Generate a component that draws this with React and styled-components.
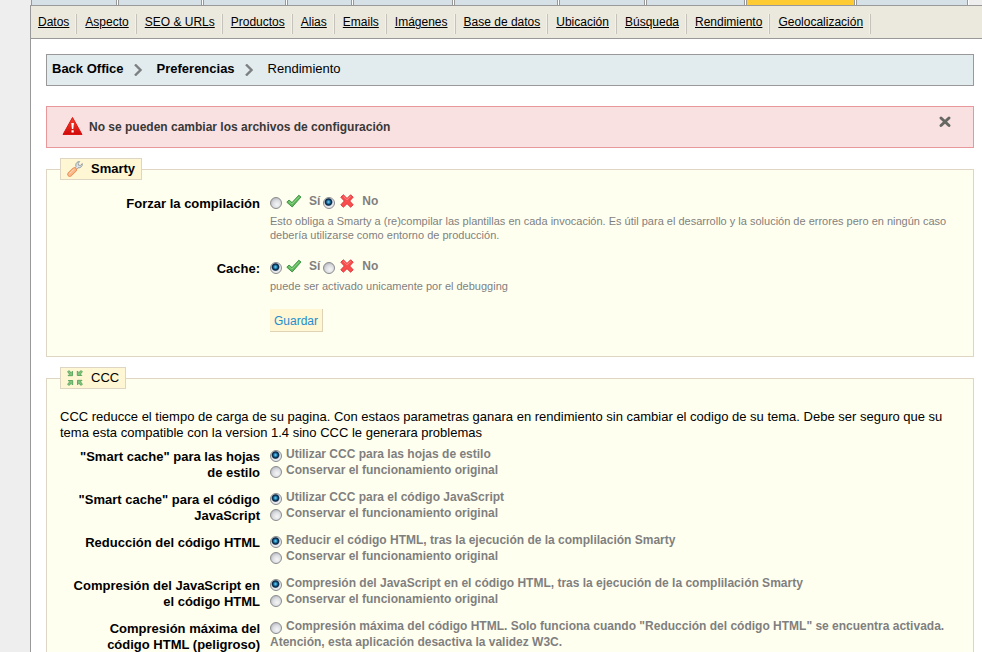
import React from "react";
import styled, { createGlobalStyle } from "styled-components";

const clr = {
   line: "#999999",
   cream: "#ebe9de",
   ice: "#e2ebee",
   tab: "#d5e1e7",
   active: "#ffcb33",
   field: "#fffff0",
   legend: "#fff6d3",
   fieldLine: "#dfd5c3",
   gray: "#7f7f7f",
};

const GlobalStyle = createGlobalStyle`
   * {
      box-sizing:border-box;
   }
   html {
      scrollbar-width:none;
   }
   body {
      margin:0;
      background:#eeeeee;
      color:#000000;
      font-family:"Liberation Sans", Arial, sans-serif;
      font-size:13px;
      line-height:16px;
   }
`;

const Page = styled.div`
   margin-left:30px;
   min-height:100vh;
`;

const Tabs = styled.div`
   display:flex;
   gap:1px;
   height:5px;
   padding-left:1px;
   overflow:hidden;
`;

const Tab = styled.div`
   flex:0 0 ${(props) => props.$width}px;
   border:1px solid ${clr.line};
   border-width:0 1px;
   background:${(props) => (props.$active ? clr.active : clr.tab)};
   box-shadow:1px 0 0 #ffffff;
`;

const Main = styled.div`
   border-top:1px solid ${clr.line};
   border-left:1px solid ${clr.line};
   background:#ffffff;
`;

const SubMenu = styled.nav`
   display:flex;
   gap:1px;
   height:33px;
   padding-top:8px;
   border-bottom:1px solid ${clr.line};
   background:${clr.cream};
`;

const SubLink = styled.a`
   height:20px;
   padding:0 7px;
   border-right:1px solid #c4c2ba;
   box-shadow:inset -1px 0 0 #f3f2ea;
   color:#000000;
   font-size:12px;
   white-space:nowrap;
`;

const Content = styled.main`
   padding:15px 8px 0 15px;
`;

const Path = styled.nav`
   display:flex;
   align-items:center;
   height:32px;
   padding:0 5px 2px;
   border:1px solid ${clr.line};
   background:${clr.ice};
`;

const PathLink = styled.a`
   color:#000000;
   font-weight:bold;
   text-decoration:none;
`;

const Alert = styled.div`
   display:flex;
   align-items:flex-start;
   height:42px;
   margin:20px 0 10px;
   padding:8px 21px 0 15px;
   border:1px solid #e8989a;
   background:#f9e1e1;
   color:#383838;
   font-size:12px;
   font-weight:bold;
`;

const AlertText = styled.span`
   flex:1;
   padding:4px 0 0 5px;
`;

const Close = styled.button`
   display:flex;
   padding:0;
   border:0;
   background:none;
   cursor:pointer;
`;

const Fieldset = styled.fieldset`
   min-width:0;
   margin:0 0 10px;
   padding:${(props) => props.$top}px 24px 24px 13px;
   border:1px solid ${clr.fieldLine};
   background:${clr.field};
`;

const Legend = styled.legend`
   display:flex;
   align-items:center;
   gap:8px;
   height:22px;
   padding:0 6px;
   border:1px solid ${clr.fieldLine};
   background:${clr.legend};
   font-weight:${(props) => (props.$bold ? "bold" : "normal")};
`;

const Intro = styled.p`
   margin:0 0 5px;
`;

const Row = styled.div`
   display:grid;
   grid-template-columns:200px 1fr;
   column-gap:10px;
   min-height:35px;
   margin-bottom:${(props) => props.$gap}px;
`;

const RowLabel = styled.div`
   padding:3px 0 0 8px;
   font-weight:bold;
   text-align:right;
`;

const Options = styled.div`
   color:${clr.gray};
   font-size:12px;
   font-weight:bold;
`;

const Choices = styled(Options)`
   display:flex;
   gap:3px;
`;

const Option = styled.label`
   display:block;
`;

const Choice = styled.label`
   display:flex;
   gap:4px;
`;

const ChoiceText = styled.span`
   padding-left:3px;
`;

const Radio = styled.input`
   appearance:none;
   width:12px;
   height:12px;
   margin:4px 4px 0 0;
   vertical-align:top;
   border:1px solid #8a8b8d;
   border-radius:50%;
   background:radial-gradient(circle at 60% 65%, #f6f6f6 0, #dcdee2 45%, #bcbec5 75%);

   &:checked {
      background:radial-gradient(circle at 45% 40%, #7fd3f3 0, #2286b8 18%, #0b2c4b 34%, #0b2c4b 40%, #e6e8ec 54%);
   }

   ${Choice} & {
      margin-right:0;
   }
`;

const Hint = styled.p`
   margin:5px 0 0;
   color:${clr.gray};
   font-size:11px;
   line-height:14px;
`;

const Save = styled.button`
   display:block;
   height:23px;
   margin-left:210px;
   padding:1px 4px 0;
   border:1px solid #ded3b5;
   border-width:0 1px 1px 0;
   background:${clr.legend};
   color:#268ccd;
   font-family:inherit;
   font-size:12px;
   cursor:pointer;
`;

const Arrow = styled.svg`
   width:8px;
   height:12px;
   margin:2px 15px 0 10px;
`;

const PathArrow = () => (
   <Arrow viewBox="0 0 8 12">
      <path d="M1 0.5 L6.5 6 L1 11.5" fill="none" stroke="#7d8081" strokeWidth="2.4" />
   </Arrow>
);

const WarningIcon = () => (
   <svg width="22" height="20" viewBox="0 0 22 20">
      <defs>
         <linearGradient id="red" x1="0" y1="0" x2="0" y2="1">
            <stop offset="0" stopColor="#f5452c" />
            <stop offset="1" stopColor="#cf0a0a" />
         </linearGradient>
      </defs>
      <path d="M10.5 2.5 L20 19.5 H1 Z" fill="url(#red)" stroke="#dd1414" strokeLinejoin="round" />
      <path d="M9.3 8 H11.9 L11.3 14 H9.9 Z M9.5 15.2 H11.7 V17.4 H9.5 Z" fill="#ffffff" />
   </svg>
);

const CloseIcon = () => (
   <svg width="14" height="14" viewBox="0 0 14 14">
      <path d="M3 3 L11 10.5 M11 3 L3 10.5" stroke="#666762" strokeWidth="3" strokeLinecap="round" />
   </svg>
);

const WrenchIcon = () => (
   <svg width="16" height="16" viewBox="0 0 16 16">
      <path
         d="M6.8 7.8 L9 5.6 C8.3 3.6 9.2 1.4 11.2 0.7 L12.6 0.6 L11.2 2.4 L11.5 4.2 L13.4 4.4 L15.3 2.6 C15.7 5.2 13.5 7.2 11 6.8 L8.6 9.3 Z"
         fill="#dfe4e7"
         stroke="#8b969d"
         strokeWidth="0.9"
      />
      <path d="M2.8 13.2 L7.4 8.8" stroke="#e88a50" strokeWidth="5" strokeLinecap="round" />
      <path d="M2.8 13.2 L7.4 8.8" stroke="#fbb98a" strokeWidth="3.4" strokeLinecap="round" />
      <path d="M2.6 12.4 L6.8 8.4" stroke="#ffd9bb" strokeLinecap="round" />
   </svg>
);

// one arrow pointing at the centre, turned for the four corners
const ShrinkIcon = () => (
   <svg width="16" height="16" viewBox="0 0 16 16">
      {[0, 90, 180, 270].map((angle) => (
         <path
            key={angle}
            transform={`rotate(${angle} 8 8)`}
            d="M0.6 1.8 L1.8 0.6 L4.1 2.6 L5.5 1.2 V5.7 H1 L2.5 4.2 Z"
            fill="#83c77f"
            stroke="#4b9b53"
            strokeWidth="0.8"
         />
      ))}
   </svg>
);

const CheckIcon = () => (
   <svg width="16" height="16" viewBox="0 0 16 16">
      <path
         d="M0.8 9.2 L3 7 L6 9.6 L12.8 2.2 L15 4 L6.2 14 Z"
         fill="#62b95f"
         stroke="#388f40"
         strokeWidth="0.9"
         strokeLinejoin="round"
      />
      <path d="M3 8.6 L6 11 L13 3.8" fill="none" stroke="#8dd783" strokeWidth="0.9" />
   </svg>
);

const CrossIcon = () => (
   <svg width="16" height="16" viewBox="0 0 16 16">
      <path
         d="M1.8 4.2 L4.4 1.8 L8 5.4 L11.6 1.8 L14.2 4.2 L10.7 8 L14.2 11.8 L11.6 14.2 L8 10.7 L4.4 14.2 L1.8 11.8 L5.3 8 Z"
         fill="#f84e4e"
         stroke="#dc3038"
         strokeWidth="0.9"
         strokeLinejoin="round"
      />
      <path d="M4.4 3.2 L8 6.8 L11.6 3.2" fill="none" stroke="#ff9090" strokeWidth="0.9" />
   </svg>
);

const tabs = [86, 84, 83, 65, 100, 104, 86, 99, 109, 112];

const links = [
   "Datos", "Aspecto", "SEO & URLs", "Productos", "Alias", "Emails", "Imágenes",
   "Base de datos", "Ubicación", "Búsqueda", "Rendimiento", "Geolocalización",
];

const original = "Conservar el funcionamiento original";

const cccRows = [
   {
      name: "css",
      label: "\"Smart cache\" para las hojas de estilo",
      options: ["Utilizar CCC para las hojas de estilo", original],
      checked: 0,
   },
   {
      name: "js",
      label: "\"Smart cache\" para el código JavaScript",
      options: ["Utilizar CCC para el código JavaScript", original],
      checked: 0,
   },
   {
      name: "html",
      label: "Reducción del código HTML",
      options: ["Reducir el código HTML, tras la ejecución de la complilación Smarty", original],
      checked: 0,
   },
   {
      name: "inline-js",
      label: "Compresión del JavaScript en el código HTML",
      options: [
         "Compresión del JavaScript en el código HTML, tras la ejecución de la complilación Smarty",
         original,
      ],
      checked: 0,
   },
   {
      name: "high",
      label: "Compresión máxima del código HTML (peligroso)",
      options: [
         "Compresión máxima del código HTML. Solo funciona cuando \"Reducción del código HTML\" se encuentra activada. Atención, esta aplicación desactiva la validez W3C.",
         original,
      ],
      checked: 1,
   },
];

const YesNoChoice = ({ name, text, icon, checked }) => (
   <Choice>
      <Radio type="radio" name={name} defaultChecked={checked} />
      {icon}
      <ChoiceText>{text}</ChoiceText>
   </Choice>
);

const YesNo = ({ name, label, yes, hint }) => (
   <Row $gap={16}>
      <RowLabel id={name}>{label}</RowLabel>
      <div>
         <Choices role="radiogroup" aria-labelledby={name}>
            <YesNoChoice name={name} text="Sí" icon={<CheckIcon />} checked={yes} />
            <YesNoChoice name={name} text="No" icon={<CrossIcon />} checked={!yes} />
         </Choices>
         <Hint>{hint}</Hint>
      </div>
   </Row>
);

const App = () => (
   <Page>
      <GlobalStyle />
      <Tabs>
         {tabs.map((width, i) => (
            <Tab key={i} $width={width} $active={i === 8} />
         ))}
      </Tabs>
      <Main>
         <SubMenu>
            {links.map((link) => (
               <SubLink key={link} href="#">{link}</SubLink>
            ))}
         </SubMenu>
         <Content>
            <Path>
               <PathLink href="#">Back Office</PathLink>
               <PathArrow />
               <PathLink href="#">Preferencias</PathLink>
               <PathArrow />
               <span>Rendimiento</span>
            </Path>
            <Alert role="alert">
               <WarningIcon />
               <AlertText>No se pueden cambiar los archivos de configuración</AlertText>
               <Close type="button" aria-label="Cerrar">
                  <CloseIcon />
               </Close>
            </Alert>
            <Fieldset $top={13}>
               <Legend $bold>
                  <WrenchIcon />
                  Smarty
               </Legend>
               <YesNo
                  name="compile"
                  label="Forzar la compilación"
                  yes={false}
                  hint="Esto obliga a Smarty a (re)compilar las plantillas en cada invocación. Es útil para el desarrollo y la solución de errores pero en ningún caso debería utilizarse como entorno de producción."
               />
               <YesNo
                  name="cache"
                  label="Cache:"
                  yes
                  hint="puede ser activado unicamente por el debugging"
               />
               <Save type="button">Guardar</Save>
            </Fieldset>
            <Fieldset $top={20}>
               <Legend>
                  <ShrinkIcon />
                  CCC
               </Legend>
               <Intro>
                  CCC reducce el tiempo de carga de su pagina. Con estaos parametras ganara en
                  rendimiento sin cambiar el codigo de su tema. Debe ser seguro que su tema esta
                  compatible con la version 1.4 sino CCC le generara problemas
               </Intro>
               {cccRows.map((row) => (
                  <Row key={row.name} $gap={8}>
                     <RowLabel id={row.name}>{row.label}</RowLabel>
                     <Options role="radiogroup" aria-labelledby={row.name}>
                        {row.options.map((text, i) => (
                           <Option key={text}>
                              <Radio type="radio" name={row.name} defaultChecked={row.checked === i} />
                              {text}
                           </Option>
                        ))}
                     </Options>
                  </Row>
               ))}
            </Fieldset>
         </Content>
      </Main>
   </Page>
);

export default App;
